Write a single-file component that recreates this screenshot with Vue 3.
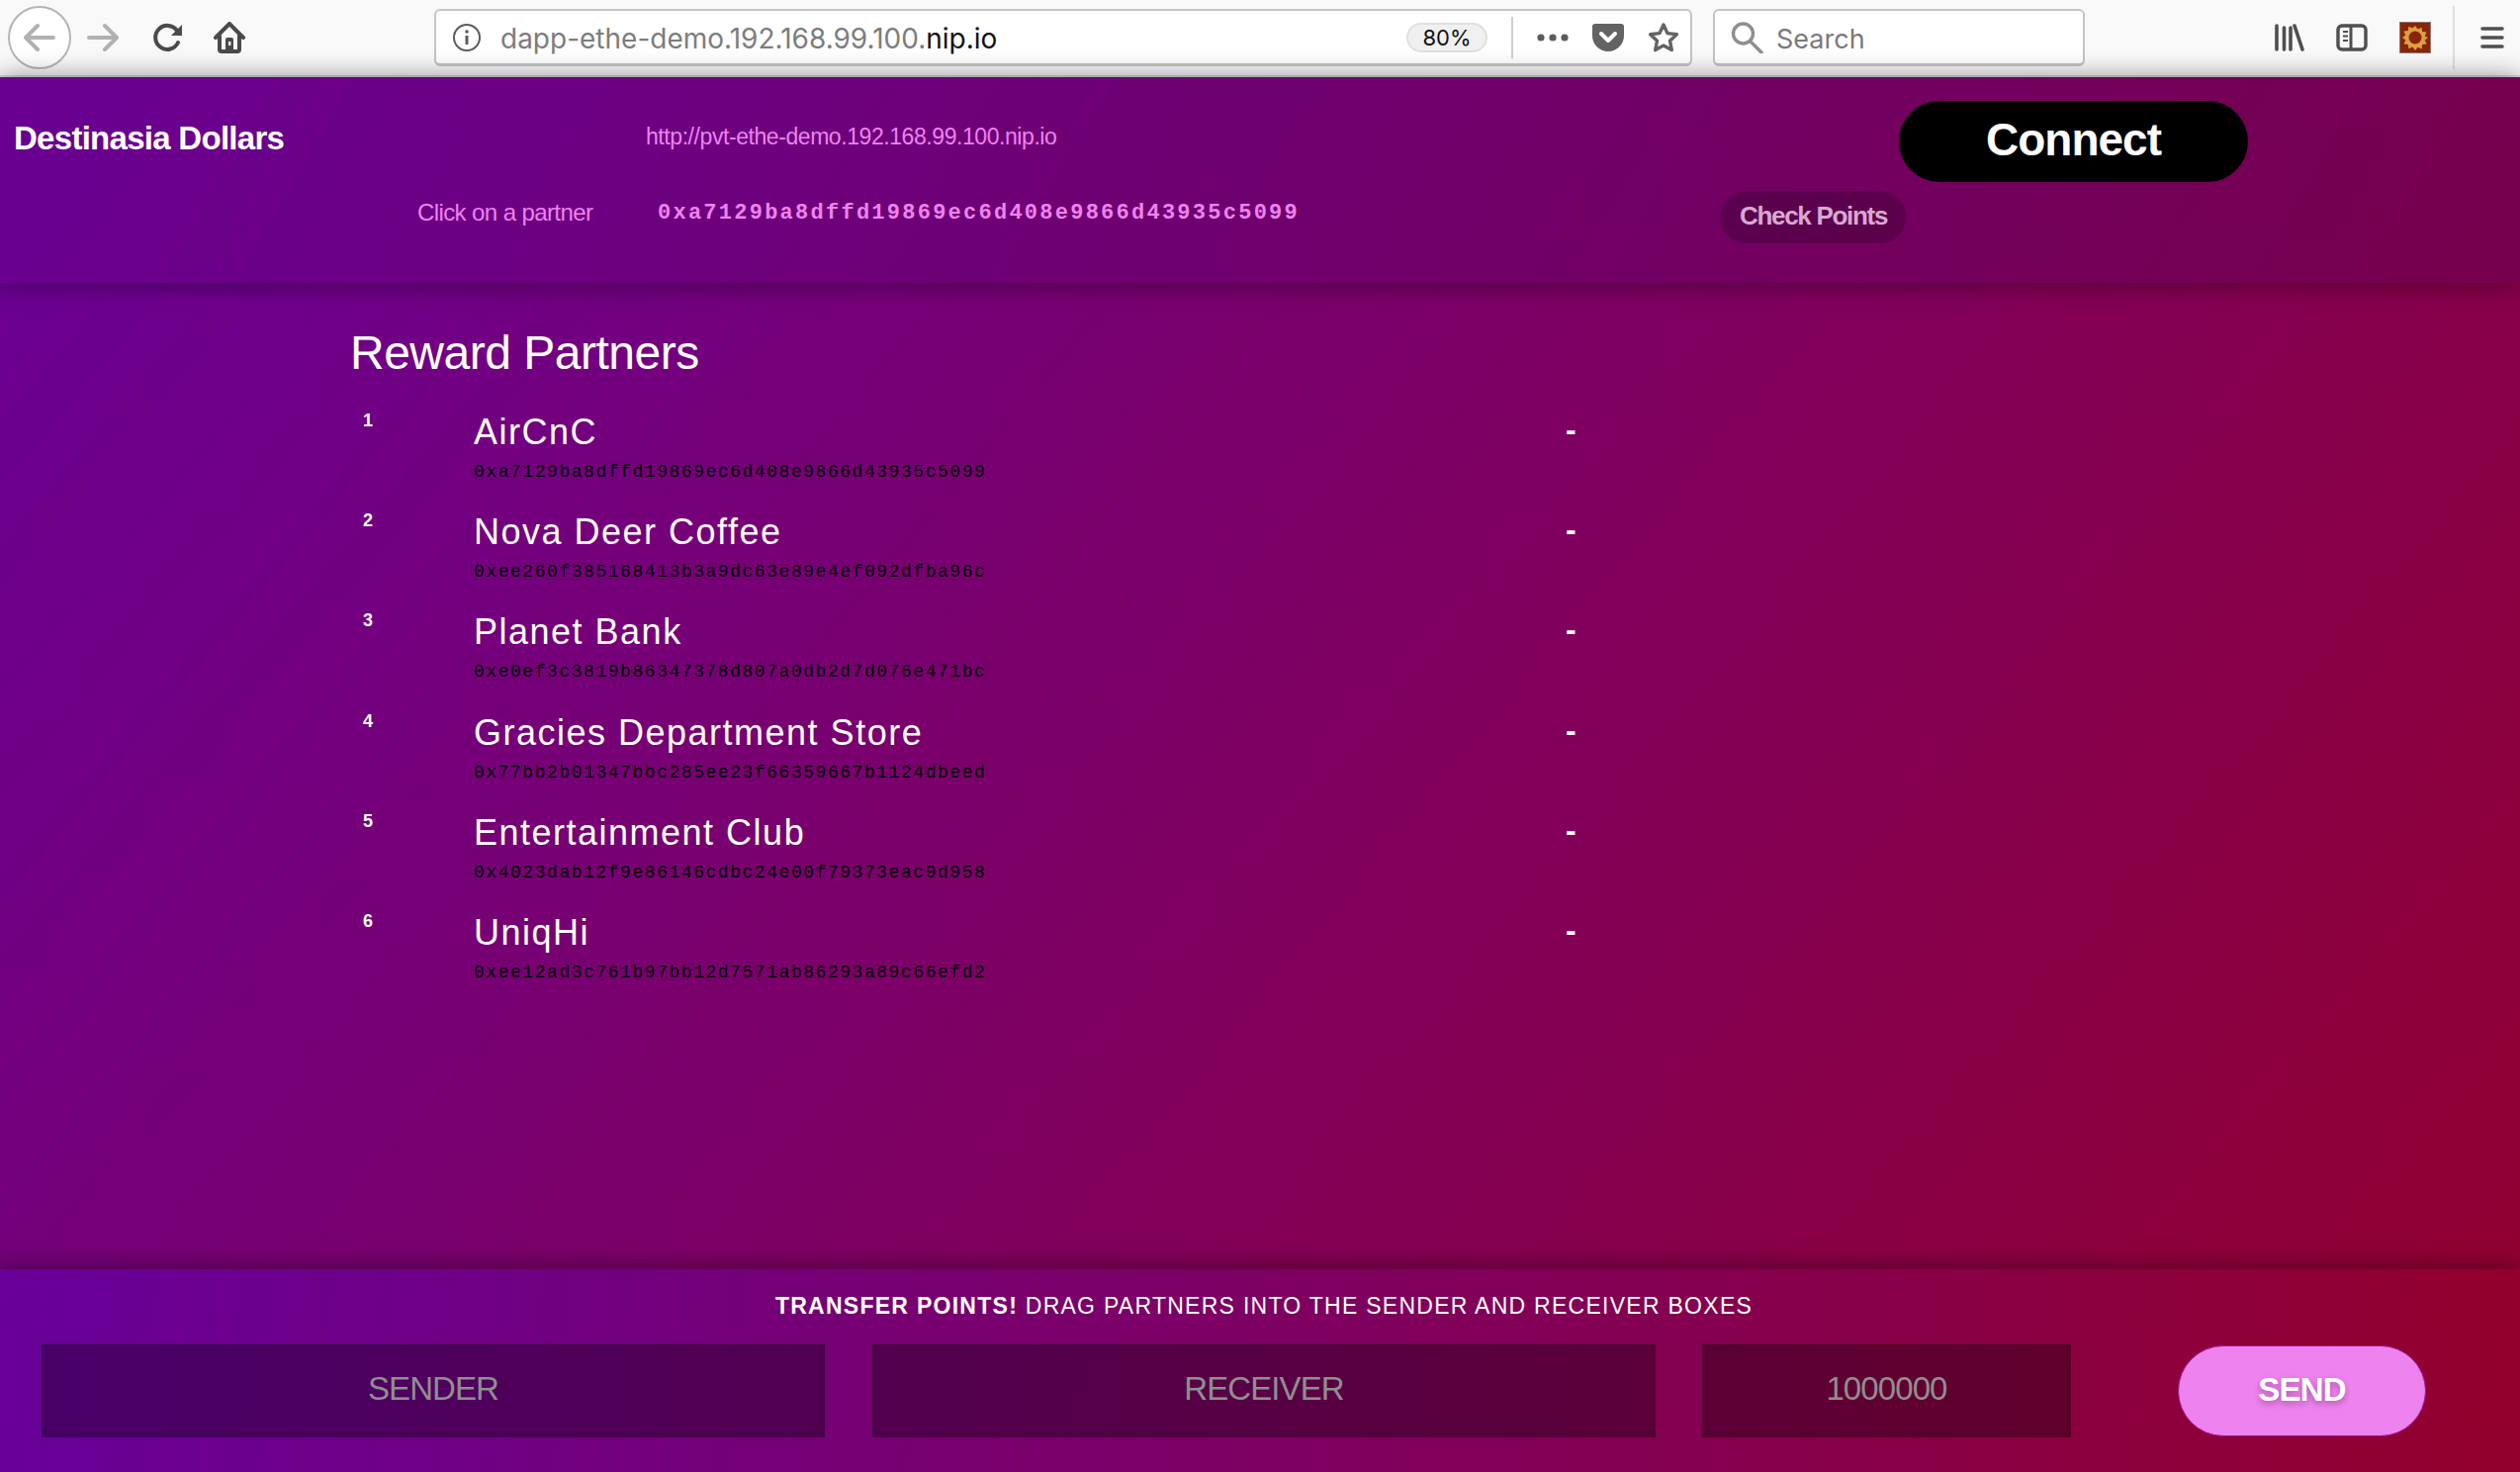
<script setup>
const partners = [
  { name: 'AirCnC', address: '0xa7129ba8dffd19869ec6d408e9866d43935c5099' },
  { name: 'Nova Deer Coffee', address: '0xee260f385168413b3a9dc63e89e4ef092dfba96c' },
  { name: 'Planet Bank', address: '0xe0ef3c3819b86347378d807a0db2d7d076e471bc' },
  { name: 'Gracies Department Store', address: '0x77bb2b01347bbc285ee23f66359667b1124dbeed' },
  { name: 'Entertainment Club', address: '0x4023dab12f9e86146cdbc24e00f79373eac9d958' },
  { name: 'UniqHi', address: '0xee12ad3c761b97bb12d7571ab86293a89c66efd2' },
]
</script>

<template>
  <div class="page">
    <div class="toolbar">
      <button type="button" class="back">
        <svg width="32" height="32" viewBox="0 0 32 32" fill="none" stroke="#b1b1b1" stroke-width="4" stroke-linecap="round" stroke-linejoin="round">
          <path d="M30 16H2M14 4L2 16l12 12" />
        </svg>
      </button>
      <svg class="forward" width="32" height="32" viewBox="0 0 32 32" fill="none" stroke="#b1b1b1" stroke-width="4" stroke-linecap="round" stroke-linejoin="round">
        <path d="M2 16h28M18 4l12 12-12 12" />
      </svg>
      <svg class="reload" width="32" height="32" viewBox="0 0 32 32" fill="none">
        <path d="M26 21a12 12 0 1 1-1-12" stroke="#4a4a4a" stroke-width="4" stroke-linecap="round" />
        <path d="M30 3v11H19z" fill="#4a4a4a" />
      </svg>
      <svg class="home" width="32" height="32" viewBox="0 0 32 32" fill="none">
        <path d="M2 16L16 2l14 14M6 14v14a2 2 0 0 0 2 2h16a2 2 0 0 0 2-2V14" stroke="#4a4a4a" stroke-width="4" stroke-linecap="round" stroke-linejoin="round" />
        <path d="M12 30V18a2 2 0 0 1 2-2h4a2 2 0 0 1 2 2v12z" fill="#4a4a4a" />
        <rect x="15" y="20" width="2.4" height="4" fill="#f9f9fa" />
      </svg>

      <div class="urlbar">
        <svg width="28" height="28" viewBox="0 0 28 28" fill="none" stroke="#5c5c5c" stroke-width="2">
          <circle cx="14" cy="14" r="13" />
          <path d="M14 12v9" stroke-width="3" />
          <circle cx="14" cy="8" r="1.8" fill="#5c5c5c" stroke="none" />
        </svg>
        <span class="url"><span class="url-dim">dapp-ethe-demo.192.168.99.100.</span>nip.io</span>
        <span class="zoom-pill">80%</span>
        <span class="url-sep"></span>
        <svg class="dots" width="32" height="8" viewBox="0 0 32 8" fill="#5c5c5c">
          <circle cx="4" cy="4" r="3.6" />
          <circle cx="16" cy="4" r="3.6" />
          <circle cx="28" cy="4" r="3.6" />
        </svg>
        <svg class="pocket" width="32" height="28" viewBox="0 0 32 28">
          <path d="M3 0h26a3 3 0 0 1 3 3v9a16 16 0 0 1-32 0V3a3 3 0 0 1 3-3z" fill="#636363" />
          <path d="M9 10l7 7 7-7" fill="none" stroke="#fff" stroke-width="4" stroke-linecap="round" stroke-linejoin="round" />
        </svg>
        <svg class="star" width="32" height="32" viewBox="0 0 32 32">
          <path d="M16 3l4 8.6 9.4 1.2-6.9 6.5 1.8 9.3L16 24l-8.3 4.6 1.8-9.3-6.9-6.5L12 11.600z" fill="none" stroke="#636363" stroke-width="3.4" stroke-linejoin="round" />
        </svg>
      </div>

      <div class="searchbar">
        <svg width="34" height="32" viewBox="0 0 34 32" fill="none" stroke="#8f8f8f" stroke-width="3.4" stroke-linecap="round">
          <circle cx="12.500" cy="12" r="10" />
          <path d="M20 20l11 11" />
        </svg>
        <span class="search-text">Search</span>
      </div>

      <svg class="library" width="30" height="28" viewBox="0 0 30 28" fill="none" stroke="#4f4f4f" stroke-width="3.6" stroke-linecap="round">
        <path d="M2 2v24M9.500 4v22M16 4v22M20 2l8 24" />
      </svg>
      <svg class="sidebar" width="32" height="28" viewBox="0 0 32 28" fill="none">
        <rect x="2" y="2" width="28" height="24" rx="4" stroke="#4f4f4f" stroke-width="3.400" />
        <path d="M15 2v24" stroke="#4f4f4f" stroke-width="3" />
        <path d="M7 8h5M7 12.500h5M7 17h5" stroke="#4f4f4f" stroke-width="2" />
      </svg>
      <svg class="extension" width="32" height="32" viewBox="0 0 32 32">
        <rect x="0.500" y="0.500" width="31" height="31" fill="#8a2408" stroke="#8a7a70" />
        <path d="M16 4l2.600 3.500 4-1.800.5 4.400 4.400.5-1.800 4 3.300 1.400-3.300 2.600 1.800 4-4.400.5-.5 4.400-4-1.800L16 29l-2.600-3.500-4 1.800-.5-4.400-4.400-.5 1.800-4L3 16l3.300-2.400-1.800-4 4.400-.5.5-4.400 4 1.800z" fill="#dca13c" />
        <circle cx="16" cy="16" r="6.500" fill="#8a2408" />
      </svg>
      <span class="tool-sep"></span>
      <svg class="burger" width="24" height="24" viewBox="0 0 24 24" stroke="#4f4f4f" stroke-width="3.600" stroke-linecap="round">
        <path d="M2 3h20M2 12h20M2 21h20" />
      </svg>
    </div>

    <header class="header">
      <div class="header-row">
        <h1 class="brand">Destinasia Dollars</h1>
        <a class="node-url">http://pvt-ethe-demo.192.168.99.100.nip.io</a>
        <button type="button" class="connect">Connect</button>
      </div>
      <div class="header-row second">
        <span class="hint">Click on a partner</span>
        <span class="selected">0xa7129ba8dffd19869ec6d408e9866d43935c5099</span>
        <button type="button" class="check">Check Points</button>
      </div>
    </header>

    <main class="main">
      <h2 class="title">Reward Partners</h2>
      <div class="partner" v-for="(p, i) in partners" :key="p.address">
        <span class="rank">{{ i + 1 }}</span>
        <div>
          <div class="name">{{ p.name }}</div>
          <div class="address">{{ p.address }}</div>
        </div>
        <span class="points">-</span>
      </div>
    </main>

    <footer class="footer">
      <p class="instructions"><b>TRANSFER POINTS!</b> DRAG PARTNERS INTO THE SENDER AND RECEIVER BOXES</p>
      <div class="transfer">
        <div class="box sender">SENDER</div>
        <div class="box receiver">RECEIVER</div>
        <div class="box amount">1000000</div>
        <button type="button" class="send">SEND</button>
      </div>
    </footer>
  </div>
</template>

<style scoped>
.page {
  width: 2548px;
  height: 1488px;
  display: flex;
  flex-direction: column;
  overflow: hidden;
  font-family: "Liberation Sans", Arial, sans-serif;
  background: linear-gradient(130deg, #680099, #93002c);
}

.toolbar {
  flex: none;
  height: 76px;
  border-bottom: 2px solid #d8d8d8;
  background: #f9f9fa;
  display: flex;
  align-items: center;
  padding-left: 8px;
}

.back {
  width: 64px;
  height: 64px;
  padding: 0;
  border: 2px solid #b5b5b5;
  border-radius: 50%;
  background: #fff;
  display: flex;
  align-items: center;
  justify-content: center;
}

.forward { margin-left: 16px; }
.reload { margin-left: 34px; }
.home { margin-left: 30px; }

.urlbar,
.searchbar {
  height: 58px;
  box-sizing: border-box;
  background: #fff;
  border: 2px solid #c4c4c4;
  border-bottom-width: 3px;
  border-radius: 6px;
  display: flex;
  align-items: center;
}

.urlbar {
  width: 1272px;
  margin-left: 191px;
  padding-left: 17px;
}

.url {
  margin: 3px 0 0 20px;
  font-family: Inter, sans-serif;
  font-size: 28px;
  color: #111;
  white-space: nowrap;
}

.url-dim {
  color: #7d7d7d;
}

.zoom-pill {
  margin-left: auto;
  width: 82px;
  height: 30px;
  box-sizing: border-box;
  border: 2px solid #e0e0e0;
  border-radius: 15px;
  background: #f0f0f0;
  font-family: Inter, sans-serif;
  font-size: 22px;
  line-height: 27px;
  text-align: center;
  color: #111;
}

.url-sep {
  width: 2px;
  height: 42px;
  margin-left: 24px;
  background: #cfcfcf;
}

.dots { margin-left: 24px; }
.pocket { margin-left: 24px; }
.star { margin-left: 24px; margin-right: 11px; }

.searchbar {
  width: 376px;
  margin-left: 21px;
  padding-left: 16px;
  gap: 12px;
  font-family: Inter, sans-serif;
  font-size: 27px;
  color: #7a7a7a;
}

.search-text { margin-top: 3px; }

.library { margin-left: 192px; }
.sidebar { margin-left: 32px; }
.extension { margin-left: 32px; }

.tool-sep {
  width: 2px;
  height: 64px;
  margin-left: 22px;
  background: #dedede;
}

.burger { margin-left: 26px; }

.header {
  flex: none;
  height: 208px;
  box-sizing: border-box;
  padding-top: 24px;
  position: relative;
  z-index: 1;
  background: linear-gradient(120deg, #690092, #76004c);
  box-shadow: 0 0 24px rgba(0, 0, 0, 0.45);
}

.header-row {
  display: flex;
  align-items: center;
  height: 82px;
}

.brand {
  width: 639px;
  margin: 0 0 6px 14px;
  font-size: 33px;
  font-weight: 700;
  letter-spacing: -0.72px;
  color: #fff;
}

.node-url {
  width: 1267px;
  margin-bottom: 10px;
  font-size: 23px;
  letter-spacing: -0.43px;
  color: #ee82ee;
}

.connect {
  width: 353px;
  height: 82px;
  padding: 0 0 5px;
  border: none;
  border-radius: 41px;
  background: #000;
  color: #fff;
  font-family: inherit;
  font-size: 46px;
  font-weight: 700;
  letter-spacing: -1px;
}

.second {
  height: 53px;
  margin-top: 9px;
}

.hint {
  width: 243px;
  margin: 0 0 9px 422px;
  font-size: 24px;
  letter-spacing: -0.6px;
  color: #ee82ee;
}

.selected {
  width: 1075px;
  margin-bottom: 9px;
  font-family: "Liberation Mono", monospace;
  font-size: 22px;
  letter-spacing: 2.25px;
  font-weight: 700;
  color: #ee82ee;
}

.check {
  width: 187px;
  height: 53px;
  padding: 0 0 2px;
  border: none;
  border-radius: 26px;
  background: rgba(0, 0, 0, 0.2);
  color: #d8a8d0;
  font-family: inherit;
  font-size: 26px;
  font-weight: 700;
  letter-spacing: -1.3px;
}

.main {
  flex: 1;
  padding: 46px 0 0 354px;
  color: #fff;
}

.title {
  margin: 0 0 27px;
  font-size: 48px;
  font-weight: 400;
  letter-spacing: -0.5px;
  line-height: 50px;
}

.partner {
  display: grid;
  grid-template-columns: 125px 1104px auto;
  height: 101.2px;
}

.rank {
  padding: 5px 0 0 13px;
  font-size: 18px;
  font-weight: 700;
  line-height: 22px;
}

.name {
  margin-top: 6px;
  font-size: 36px;
  letter-spacing: 1.5px;
  line-height: 44px;
}

.address {
  margin-top: 9px;
  font-family: "Liberation Mono", monospace;
  font-size: 18px;
  letter-spacing: 1.54px;
  line-height: 18px;
  color: #000;
}

.points {
  margin-top: 3px;
  font-size: 32px;
  font-weight: 700;
  line-height: 44px;
}

.footer {
  flex: none;
  height: 205px;
  box-sizing: border-box;
  padding: 0 42px;
  position: relative;
  z-index: 1;
  background: linear-gradient(95deg, #680099, #93002c);
  box-shadow: 0 0 24px rgba(0, 0, 0, 0.45);
}

.instructions {
  margin: 0;
  padding: 24px 0 0 8px;
  height: 76px;
  box-sizing: border-box;
  font-size: 23px;
  letter-spacing: 1.27px;
  line-height: 26px;
  text-align: center;
  color: #fff;
}

.transfer {
  display: flex;
  align-items: center;
}

.box {
  height: 94px;
  padding-bottom: 5px;
  box-sizing: border-box;
  display: flex;
  align-items: center;
  justify-content: center;
  background: rgba(0, 0, 0, 0.3);
  box-shadow: inset 0 0 8px rgba(0, 0, 0, 0.2);
  color: #8f8f8f;
  font-size: 33px;
  letter-spacing: -0.9px;
}

.sender,
.receiver {
  width: 792px;
}

.receiver { margin-left: 48px; }

.amount {
  width: 373px;
  margin-left: 47px;
}

.send {
  width: 251px;
  height: 92px;
  margin-left: 108px;
  padding: 0 0 2px;
  border: 1px solid #a0109a;
  border-radius: 46px;
  background: #ee82ee;
  color: #fff;
  font-family: inherit;
  font-size: 33px;
  font-weight: 700;
  letter-spacing: -0.8px;
  text-shadow: 0 3px 6px rgba(0, 0, 0, 0.3);
}
</style>
